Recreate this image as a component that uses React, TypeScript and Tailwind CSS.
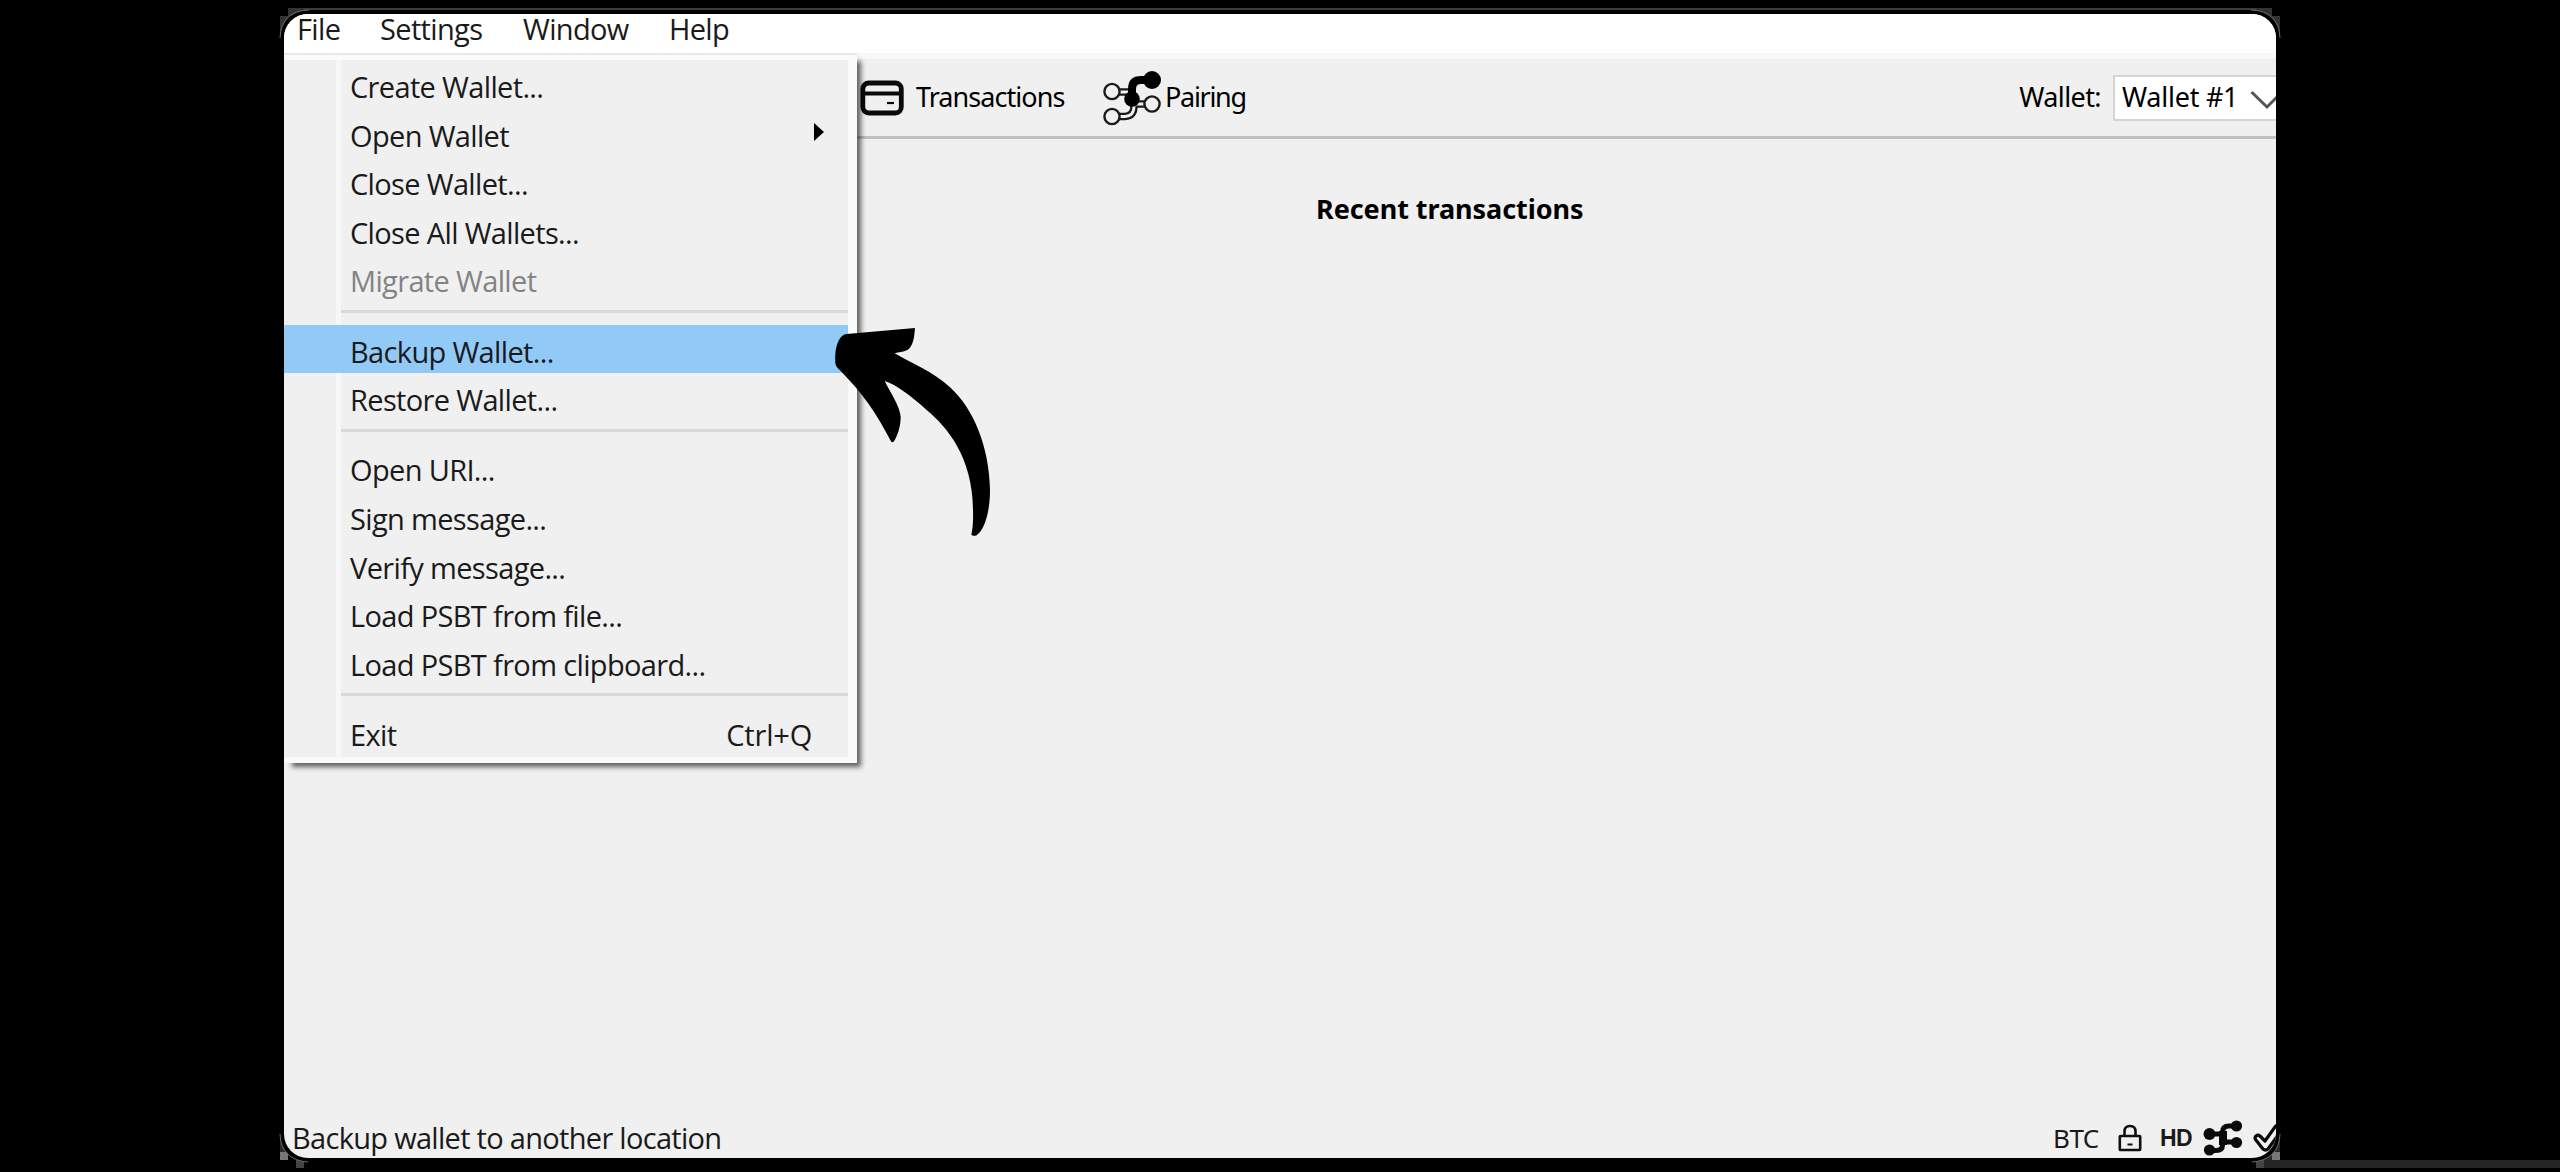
type Entry = { label: string; shortcut?: string; submenu?: boolean; disabled?: boolean; active?: boolean };

const groups: Entry[][] = [
  [
    { label: 'Create Wallet...' },
    { label: 'Open Wallet', submenu: true },
    { label: 'Close Wallet...' },
    { label: 'Close All Wallets...' },
    { label: 'Migrate Wallet', disabled: true },
  ],
  [{ label: 'Backup Wallet...', active: true }, { label: 'Restore Wallet...' }],
  [
    { label: 'Open URI...' },
    { label: 'Sign message...' },
    { label: 'Verify message...' },
    { label: 'Load PSBT from file...' },
    { label: 'Load PSBT from clipboard...' },
  ],
  [{ label: 'Exit', shortcut: 'Ctrl+Q' }],
];

function MenuRow({ e }: { e: Entry }) {
  return (
    <div
      className={`flex h-[48.6px] items-center justify-between pt-[5px] pr-[36px] pl-[66px] ${
        e.active ? 'bg-[#91c9f7]' : ''
      } ${e.disabled ? 'text-[#838383]' : 'text-[#1a1a1a]'}`}
    >
      <span>{e.label}</span>
      {e.shortcut && <span className="tracking-[-0.2px]">{e.shortcut}</span>}
      {e.submenu && (
        <svg className="mr-[-12px] mb-[6px] h-[18px] w-[10px]" viewBox="0 0 10 18">
          <path d="M0 0L10 9L0 18Z" fill="#000" />
        </svg>
      )}
    </div>
  );
}

function FileMenu() {
  return (
    <div className="absolute top-[39px] left-0 w-[573px] border-t-2 border-[#e8e8e8] bg-[#fafafa] pt-[5px] pr-[9px] pb-[6px] shadow-[6px_6px_5px_-2px_rgba(0,0,0,0.6)]">
      <div className="bg-[#f0f0f0]">
        <div className="bg-[linear-gradient(90deg,transparent_52px,#f7f7f7_52px,#f7f7f7_57px,transparent_57px)]">
          {groups.map((g, i) => (
            <div key={i}>
              {i > 0 && (
                <div className="h-[21.6px] pt-[7px] pl-[57px]">
                  <div className="h-[3px] bg-[#d9d9d9]" />
                </div>
              )}
              {g.map((e) => (
                <MenuRow key={e.label} e={e} />
              ))}
            </div>
          ))}
        </div>
      </div>
    </div>
  );
}

function CardIcon() {
  return (
    <svg className="h-9 w-11 shrink-0" viewBox="0 0 44 36" fill="none" stroke="#0a0a0a">
      <rect x="2.8" y="3" width="38.500" height="30" rx="6" strokeWidth="4.800" />
      <path d="M3 13.500H41" strokeWidth="4.200" />
      <path d="M27 23h7" strokeWidth="2.200" />
    </svg>
  );
}

function PairingIcon() {
  return (
    <svg className="h-14 w-[60px] shrink-0" viewBox="0 0 60 56" fill="none" stroke="#1a1a1a">
      <path d="M16 22H30M30 34H43M16 46.500H23Q32 46 32 36V30" strokeWidth="7.500" />
      <path d="M16 22H30M30 34H43M16 46.500H23Q32 46 32 36V30" strokeWidth="2.800" stroke="#f0f0f0" />
      <circle cx="10" cy="21.500" r="7.600" strokeWidth="2.400" fill="#f0f0f0" />
      <circle cx="10" cy="46.500" r="7.600" strokeWidth="2.400" fill="#f0f0f0" />
      <circle cx="50" cy="34" r="7.600" strokeWidth="2.400" fill="#f0f0f0" />
      <path d="M30 28V19Q30 10 39 10H50" strokeWidth="8" stroke="#000" />
      <circle cx="50" cy="10" r="9" fill="#000" stroke="none" />
      <circle cx="30" cy="29" r="7.800" fill="#000" stroke="none" />
    </svg>
  );
}

function LockIcon() {
  return (
    <svg className="h-[28px] w-[24px] shrink-0" viewBox="0 0 24 28" fill="none" stroke="#0f0f0f" strokeWidth="2.600">
      <rect x="1.800" y="12" width="20.400" height="14" rx="0.800" />
      <path d="M6.500 12V7.500Q6.500 2 12 2Q17.500 2 17.500 7.500V12" />
      <path d="M9.500 20.500H14.500" strokeWidth="2.200" />
    </svg>
  );
}

function NetworkIcon() {
  return (
    <svg className="h-9 w-10 shrink-0" viewBox="0 0 40 36" fill="none" stroke="#0a0a0a" strokeWidth="5">
      <path d="M6 14H20M20 22H34M6 30.500H13Q19.500 30.500 19.500 25V12Q19.500 6 26 6H34" />
      <path d="M20 11V25" strokeWidth="8" />
      <g fill="#0a0a0a" stroke="none">
        <circle cx="6.500" cy="14" r="6" />
        <circle cx="6.500" cy="30" r="5.600" />
        <circle cx="33.500" cy="6" r="5.600" />
        <circle cx="33.500" cy="22.500" r="5.600" />
      </g>
    </svg>
  );
}

function CheckIcon() {
  return (
    <svg className="h-[30px] w-[32px] shrink-0" viewBox="0 0 32 30" fill="none" stroke="#0a0a0a" strokeWidth="3.200">
      <path d="M2.500 16.500Q1.500 14.500 3 13Q5 11.500 7 13L12 18L22 4Q24 1.500 27 2.500Q30 4.500 28 8L15 26Q12.500 28 10 26Z" strokeLinejoin="round" />
    </svg>
  );
}

function FrameEdges() {
  return (
    <svg className="absolute inset-0 h-[1172px] w-[2560px]" viewBox="0 0 2560 1172" fill="none">
      <path d="M304 9H2256" stroke="#3c3c3c" strokeWidth="2" />
      <path d="M288 8h16v8h-16zM280 16h8v20h-8zM2256 8h16v8h-16zM2272 16h8v20h-8z" fill="#333" />
      <path d="M2272 1138h8v14h-8zM2264 1152h8v8h-8zM280 1138h8v14h-8z" fill="#2a2a2a" />
      <path d="M2264 1160H2560v8H2264z" fill="#252525" />
      <path d="M280 1152h8v8h-8zM2272 1152h8v8h-8z" fill="#777" />
      <path d="M296 1160h8v8h-8zM2256 1160h8v8h-8z" fill="#444" />
      <rect x="280" y="10" width="2000" height="1152" rx="28" fill="#000" />
      <path
        d="M280 38Q281 11 309 10M2251 10Q2279 11 2280 38M280 1134Q281 1160 308 1162M2280 1134Q2279 1160 2252 1162"
        stroke="#6a6a6a"
      />
    </svg>
  );
}

function Arrow() {
  return (
    <svg className="absolute top-[300px] left-[800px] h-[260px] w-[230px]" viewBox="0 0 690 780">
      <path
        d="M106 190C104 150 112 106 140 102L345 84C343 110 340 140 322 150C310 156 296 156 284 160C340 192 400 216 450 262C520 325 568 440 570 570C570 640 552 690 530 706Q522 710 514 704C518 690 520 660 519 630C518 470 440 380 380 330C330 285 290 255 254 243C270 275 300 320 302 350C302 380 292 410 280 426Q276 428 272 422C220 320 170 260 112 203Q106 197 106 190Z"
        fill="#000"
      />
    </svg>
  );
}

export default function App() {
  return (
    <div className="relative flex h-[1172px] w-[2560px] overflow-hidden bg-black">
      <FrameEdges />
      <div className="relative mt-[14px] ml-[284px] flex h-[1144px] w-[1992px] flex-col rounded-[24px] bg-[#f0f0f0] font-['Open_Sans','Noto_Sans',sans-serif] text-[29px] tracking-[-0.65px] text-[#1a1a1a]">
        <nav className="flex h-[39px] shrink-0 rounded-t-[24px] bg-white leading-[30px]">
          <span className="w-[96px] pl-[13px]">File</span>
          <span className="w-[143px]">Settings</span>
          <span className="w-[146px]">Window</span>
          <span>Help</span>
        </nav>
        <header className="flex h-[86px] shrink-0 items-center border-t-[6px] border-b-[3px] border-t-[#f8f8f8] border-b-[#c0c0c0] pl-[576px] font-['Noto_Sans',sans-serif] text-[27px] text-black">
          <CardIcon />
          <span className="ml-[12px] w-[186px] shrink-0 tracking-[-0.95px]">Transactions</span>
          <PairingIcon />
          <span className="ml-[3px] tracking-[-1.3px]">Pairing</span>
          <span className="ml-auto tracking-[-0.6px]">Wallet:</span>
          <div className="ml-3 flex h-[46px] w-[163px] shrink-0 items-center justify-between border-2 border-r-0 border-[#d4d4d4] bg-white pl-[7px] tracking-[-0.25px]">
            Wallet #1
            <svg className="mt-1 h-[22px] w-[26px]" viewBox="0 0 26 22" fill="none" stroke="#555" strokeWidth="3">
              <path d="M1.500 3L17 18L27 8" />
            </svg>
          </div>
        </header>
        <main className="grow pt-[50px] pl-[1032px]">
          <h2 className="font-['Noto_Sans',sans-serif] text-[27px] font-bold tracking-[-0.05px] text-black">Recent transactions</h2>
        </main>
        <footer className="flex h-11 shrink-0 items-center justify-between overflow-hidden rounded-b-[24px] pt-1 pl-[8px]">
          <span className="tracking-[-0.7px]">Backup wallet to another location</span>
          <div className="flex h-10 w-[223px] items-center">
            <span className="w-[65px] shrink-0 font-['Noto_Sans',sans-serif] text-[26px] tracking-[-0.5px]">BTC</span>
            <LockIcon />
            <span className="ml-[18px] w-[43px] shrink-0 font-['Liberation_Sans',sans-serif] text-[23px] font-bold tracking-[-0.5px]">HD</span>
            <NetworkIcon />
            <div className="ml-[10px] shrink-0"><CheckIcon /></div>
          </div>
        </footer>
        <FileMenu />
      </div>
      <Arrow />
    </div>
  );
}
